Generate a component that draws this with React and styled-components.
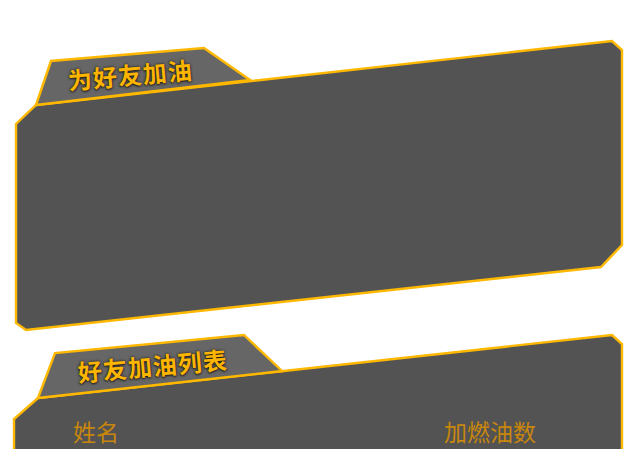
import React from "react";
import styled, { createGlobalStyle } from "styled-components";

const GlobalStyle = createGlobalStyle`
  html, body {
    margin: 0;
    padding: 0;
    background: #ffffff;
    overflow: hidden;
  }
  body {
    font-family: "Noto Sans CJK SC", "Noto Sans", sans-serif;
  }
`;

const Page = styled.div`
  width: 639px;
  height: 449px;
  display: flex;
  flex-direction: column;
  padding-top: 38px;
  box-sizing: border-box;
  overflow: hidden;
`;

const PanelWrap = styled.section`
  position: relative;
  flex: none;
  height: ${({ $height }) => $height}px;
  box-sizing: border-box;
  padding-top: ${({ $padTop }) => $padTop}px;
`;

const Backdrop = styled.svg`
  position: absolute;
  left: 0;
  top: 0;
  width: 639px;
  height: 100%;
  z-index: 0;
  overflow: visible;
`;

const Content = styled.div`
  position: relative;
  z-index: 1;
  display: flex;
  flex-direction: column;
`;

const Title = styled.h2`
  margin: 0;
  margin-left: ${({ $left }) => $left}px;
  font-size: 24px;
  line-height: 24px;
  height: 24px;
  font-weight: 700;
  letter-spacing: 1px;
  color: #fdb500;
  text-shadow: 0 0 3px rgba(0, 0, 0, 0.75), 0 1px 2px rgba(0, 0, 0, 0.6);
  transform: rotate(-5deg);
  transform-origin: left center;
  white-space: nowrap;
`;

const HeaderRow = styled.div`
  display: grid;
  grid-template-columns: 371px auto;
  padding-left: 73px;
  margin-top: 36px;
`;

const HeaderCell = styled.span`
  font-size: 23px;
  line-height: 23px;
  color: #c8870c;
  white-space: nowrap;
`;

const STROKE = "#ffb800";

const Panel = ({ top, height, padTop, main, tab, children }) => (
  <PanelWrap $height={height} $padTop={padTop}>
    <Backdrop viewBox={`0 ${top} 639 ${height}`} preserveAspectRatio="none">
      <polygon points={main} fill="#535353" stroke={STROKE} strokeWidth="2.4" strokeLinejoin="miter" />
      <polygon points={tab} fill="#666666" stroke={STROKE} strokeWidth="2.4" strokeLinejoin="miter" />
    </Backdrop>
    <Content>{children}</Content>
  </PanelWrap>
);

const App = () => (
  <>
    <GlobalStyle />
    <Page>
      <Panel
        top={38}
        height={295}
        padTop={30}
        main="36,105 612,41 622,50 622,245 601,267 26,330 16,323 16,124"
        tab="36,105 51,61 204,48 250,80"
      >
        <Title $left={68}>为好友加油</Title>
      </Panel>
      <Panel
        top={333}
        height={180}
        padTop={27}
        main="38,398 612,335 622,344 622,560 14,560 14,419"
        tab="38,398 55,353 244,335 282,371"
      >
        <Title $left={78}>好友加油列表</Title>
        <HeaderRow>
          <HeaderCell>姓名</HeaderCell>
          <HeaderCell>加燃油数</HeaderCell>
        </HeaderRow>
      </Panel>
    </Page>
  </>
);

export default App;
